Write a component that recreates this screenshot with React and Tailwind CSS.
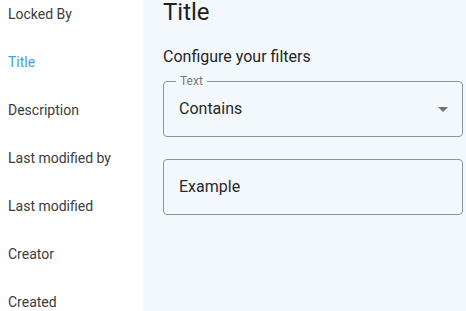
export default function App() {
  const items = [
    "Locked By",
    "Title",
    "Description",
    "Last modified by",
    "Last modified",
    "Creator",
    "Created",
  ];
  return (
    <div
      className="flex h-[311px] w-[466px] overflow-hidden bg-white"
      style={{ fontFamily: "Roboto, 'Liberation Sans', sans-serif" }}
    >
      <div className="w-[143px] shrink-0 bg-white">
        <div className="-mt-[10px] flex flex-col">
          {items.map((t) => (
            <div
              key={t}
              className={
                "flex h-[48px] items-center pl-[8px] text-[14px] " +
                (t === "Title" ? "text-[#45a1d5]" : "text-[#3c3c3c]")
              }
            >
              {t}
            </div>
          ))}
        </div>
      </div>
      <div className="flex-1 bg-[#f2f8fc] pl-[20px]">
        <div className="text-[24px] leading-[24px] text-[#1f1f1f]">Title</div>
        <div className="mt-[21px] text-[16px] leading-[24px] text-[#262626]">
          Configure your filters
        </div>
        <div className="relative mt-[12px] flex h-[56px] w-[300px] items-center rounded-[4px] border border-[#8f9497] pl-[15px] pr-[7px]">
          <span className="absolute left-[12px] top-[-9px] bg-[#f2f8fc] px-[4px] text-[12px] leading-[17px] text-[#7a7a7a]">
            Text
          </span>
          <span className="flex-1 text-[16px] text-[#2a2a2a]">Contains</span>
          <svg width="24" height="24" viewBox="0 0 24 24" className="text-[#737373]">
            <path d="M7 10l5 5 5-5z" fill="currentColor" />
          </svg>
        </div>
        <div className="mt-[22px] flex h-[56px] w-[300px] items-center rounded-[4px] border border-[#8f9497] pl-[15px]">
          <span className="text-[16px] text-[#2a2a2a]">Example</span>
        </div>
      </div>
    </div>
  );
}
